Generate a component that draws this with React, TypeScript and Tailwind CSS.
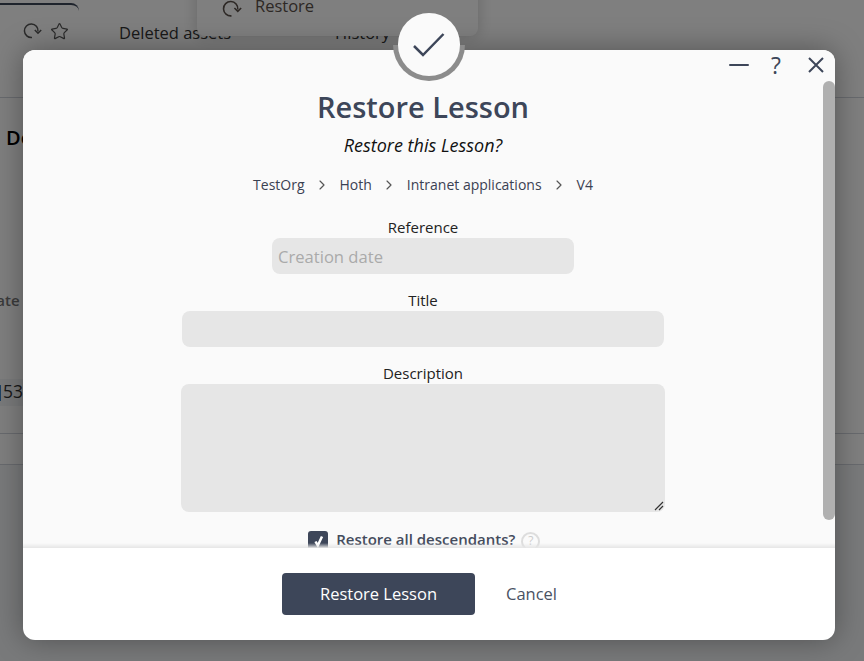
import React from 'react';
import { ChevronRight, Star } from 'lucide-react';

const crumbs = ['TestOrg', 'Hoth', 'Intranet applications', 'V4'];

const ReloadIcon = ({ className }: { className: string }) => (
  <svg className={className} viewBox="0 0 19 18" fill="none" stroke="currentColor" strokeWidth="1.5">
    <path d="M9 15.5 A6.8 6.8 0 1 1 15 9.5" />
    <path d="M11.8 8 L15 11.2 L18.2 8" />
  </svg>
);

const App: React.FC = () => {
  return (
    <div className="relative h-[661px] w-[864px] overflow-hidden bg-white font-['Open_Sans',sans-serif] text-[#333]">
      {/* Page behind the overlay */}
      <div className="flex h-[98px] border-b border-gray-300">
        <div className="mt-[3px] flex h-[60px] w-[79px] justify-end gap-[8px] rounded-tr-lg border-t-2 border-[#3d4659] bg-white pr-[10px] pt-[17px]">
          <ReloadIcon className="h-[18px] w-[19px] text-[#555]" />
          <Star className="h-[19px] w-[19px] text-[#555]" strokeWidth={1.5} />
        </div>
        <div className="ml-[40px] mt-[21px] text-[16.5px]">Deleted assets</div>
        <div className="ml-[104px] mt-[21px] text-[16.5px]">History</div>
      </div>
      <div className="h-[367px] border-b border-gray-300 bg-white pl-[6px] pt-[25px]">
        <div className="text-[20px] font-semibold text-black">Details</div>
        <div className="mt-[137px] -ml-[85px] text-[15px] font-semibold leading-[21px] text-[#777]">Creation date</div>
        <div className="mt-[68px] -ml-[6px] flex h-[27px] w-[60px] items-center gap-[2px] bg-gray-100 pb-[3px] text-[17.5px]">
          <span className="mt-[3px] h-[16px] w-[1px] bg-[#3b82c4]" />
          53
        </div>
        <div className="mt-[27px] -ml-[6px] h-px bg-gray-300" />
      </div>
      <div className="h-[196px] bg-gray-100" />

      {/* Open menu */}
      <div className="absolute left-[197px] top-[-30px] flex h-[66px] w-[281px] items-end rounded-lg bg-white pb-[17px] pl-[25px] text-[16.5px] text-[#5a504a] shadow-[0_0_16px_rgba(0,0,0,0.2)]">
        <ReloadIcon className="mr-[13px] h-[20px] w-[20px]" />
        Restore
      </div>

      {/* Overlay */}
      <div className="absolute inset-0 bg-black/50" />

      {/* Modal */}
      <div className="absolute left-[23px] top-[50px] flex h-[590px] w-[812px] flex-col rounded-xl bg-white shadow-[0_0_30px_rgba(0,0,0,0.35)]">
        <div className="relative flex h-[498px] shrink-0 flex-col items-center overflow-hidden rounded-t-xl bg-[#fafafa] pr-[12px]">
          <div className="absolute right-[11px] top-[5px] flex items-center text-[#3d4659]">
            <span className="h-[2px] w-[20px] rounded bg-[#3d4659]" />
            <span className="ml-[22px] text-[23px] leading-[20px]">?</span>
            <svg className="ml-[27px] h-[16px] w-[16px]" viewBox="0 0 16 16" fill="none" stroke="currentColor" strokeWidth="2">
              <path d="M1 1 L15 15 M15 1 L1 15" />
            </svg>
          </div>
          <div className="absolute right-0 top-[31px] h-[439px] w-[12px] rounded-lg bg-[#b0b0b0]" />

          <h1 className="mt-[36px] shrink-0 text-[29px] font-semibold leading-[42px] text-[#3d4659]">Restore Lesson</h1>
          <p className="mt-[5px] shrink-0 text-[18px] italic leading-[24px] text-[#111]">Restore this Lesson?</p>
          <div className="mt-[16px] flex shrink-0 items-center text-[14px] font-medium leading-[24px] text-[#3a4152]">
            {crumbs.map((c, i) => (
              <React.Fragment key={c}>
                {i > 0 && <ChevronRight className="mx-[9.5px] h-[16px] w-[16px] text-[#555]" strokeWidth={1.75} />}
                <span>{c}</span>
              </React.Fragment>
            ))}
          </div>
          <label className="mb-px mt-[20px] shrink-0 text-[15px] leading-[20px] text-[#222]">Reference</label>
          <div className="flex h-[36px] w-[302px] shrink-0 items-center rounded-lg bg-[#e6e6e6] px-[6px] pt-[2px] text-[16.6px] text-[#aaa]">
            Creation date
          </div>
          <label className="mb-px mt-[16px] shrink-0 text-[15px] leading-[20px] text-[#222]">Title</label>
          <div className="h-[36px] w-[482px] shrink-0 rounded-lg bg-[#e6e6e6]" />
          <label className="mb-px mt-[16px] shrink-0 text-[15px] leading-[20px] text-[#222]">Description</label>
          <div className="relative h-[128px] w-[484px] shrink-0 rounded-lg bg-[#e6e6e6]">
            <svg className="absolute bottom-[1px] right-[1px] h-[10px] w-[10px]" viewBox="0 0 10 10" stroke="#333" strokeWidth="1.2">
              <path d="M1 9 L9 1 M5 9 L9 5" />
            </svg>
          </div>
          <div className="ml-[2px] mt-[17px] flex shrink-0 items-center text-[15px] font-semibold leading-[20px] text-[#444b5c]">
            <span className="mr-[8.5px] h-[20px] w-[20px] rounded-[3px] bg-[#3d4659]">
              <svg className="h-[20px] w-[20px]" viewBox="0 0 20 20" fill="none" stroke="white" strokeWidth="2.5">
                <path d="M7.5 10.5 L9.8 14.5 L14 5.5" />
              </svg>
            </span>
            <span className="mb-[4px]">Restore all descendants?</span>
            <span className="ml-[6px] flex h-[19px] w-[19px] items-center justify-center rounded-full border-2 border-[#ddd] text-[12px] font-normal text-[#ccc]">?</span>
          </div>
          <div className="absolute bottom-0 left-0 right-0 h-[5px] bg-gradient-to-b from-transparent to-[#e6e6e6]" />
        </div>
        <div className="flex flex-1 items-center pl-[259px]">
          <button className="h-[42px] w-[193px] rounded bg-[#3d4659] text-[16.5px] font-medium text-white">Restore Lesson</button>
          <button className="ml-[31px] text-[16.5px] text-[#4a5263]">Cancel</button>
        </div>
      </div>

      {/* Check badge on the modal's top edge */}
      <div className="absolute left-[393px] top-[45px] h-[36px] w-[72px] rounded-b-full bg-[#8c8c8c]" />
      <div className="absolute left-[398px] top-[13px] flex h-[63px] w-[62px] items-center justify-center rounded-full bg-[#fafafa]">
        <svg className="h-[32px] w-[32px]" viewBox="0 0 32 32" fill="none" stroke="#3d4659" strokeWidth="2.5">
          <path d="M1 17 L10 26 L30.5 5" />
        </svg>
      </div>
    </div>
  );
};

export default App;
